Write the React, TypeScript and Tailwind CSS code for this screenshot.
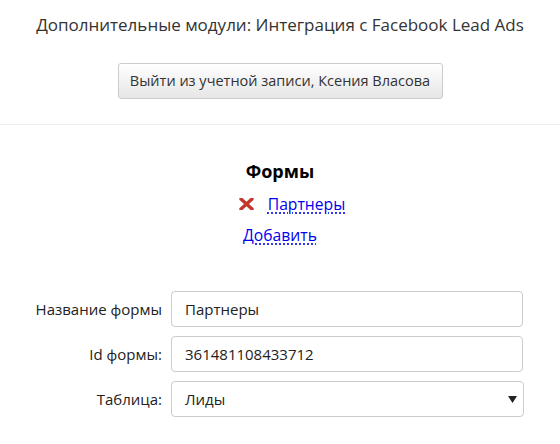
import React from "react";

const font = { fontFamily: '"Open Sans", "Noto Sans", sans-serif' };

const Field = ({ label, children }: { label: string; children: React.ReactNode }) => (
  <div className="flex items-center">
    <label className="w-[162px] shrink-0 text-right text-[15px] text-[#222]">{label}</label>
    <div className="ml-[9px] w-[352px]">{children}</div>
  </div>
);

const inputCls =
  "block h-[36px] w-full rounded-[4px] border border-[#ccc] bg-white px-[13px] text-[15px] text-[#222] outline-none";

const linkCls =
  "text-[15.7px] leading-[18px] text-[#0000ee] underline decoration-dotted decoration-[#0000ee] underline-offset-[3px]";

export default function App() {
  return (
    <div className="min-h-[444px] w-[560px] bg-white text-[#222]" style={font}>
      <div className="flex flex-col items-center pt-[12px]">
        <h1 className="text-[17px] leading-[26px] text-[#333]">
          Дополнительные модули: Интеграция с Facebook Lead Ads
        </h1>
        <button className="mt-[25px] h-[36px] w-[325px] rounded-[3px] border border-[#ccc] bg-gradient-to-b from-white to-[#e6e6e6] text-[14.5px] text-[#333]">
          Выйти из учетной записи, Ксения Власова
        </button>
      </div>
      <div className="mt-[25px] border-t border-[#eee]" />

      <div className="flex flex-col items-center pt-[33px]">
        <h2 className="text-[18px] font-bold leading-[26px] text-black">Формы</h2>
        <div className="mt-[11px] flex items-center pl-[24px]">
          <svg width="15" height="12" viewBox="0 0 15 12" className="mr-[14px]">
            <path d="M2 1 L13 11 M13 1 L2 11" stroke="#c0392b" strokeWidth="3.4" strokeLinecap="round" />
          </svg>
          <a className={linkCls}>Партнеры</a>
        </div>
        <div className="mt-[10px]">
          <a className={linkCls}>Добавить</a>
        </div>
      </div>

      <div className="mt-[44px] flex flex-col gap-[9px]">
        <Field label="Название формы">
          <input className={inputCls} defaultValue="Партнеры" style={font} />
        </Field>
        <Field label="Id формы:">
          <input className={inputCls} defaultValue="361481108433712" style={font} />
        </Field>
        <Field label="Таблица:">
          <div className="relative w-[353px]">
            <div className={inputCls + " flex items-center"}>Лиды</div>
            <svg width="9" height="7" viewBox="0 0 9 7" className="absolute right-[7px] top-[15px]">
              <path d="M0 0 H9 L4.5 7 Z" fill="#222" />
            </svg>
          </div>
        </Field>
      </div>
    </div>
  );
}
